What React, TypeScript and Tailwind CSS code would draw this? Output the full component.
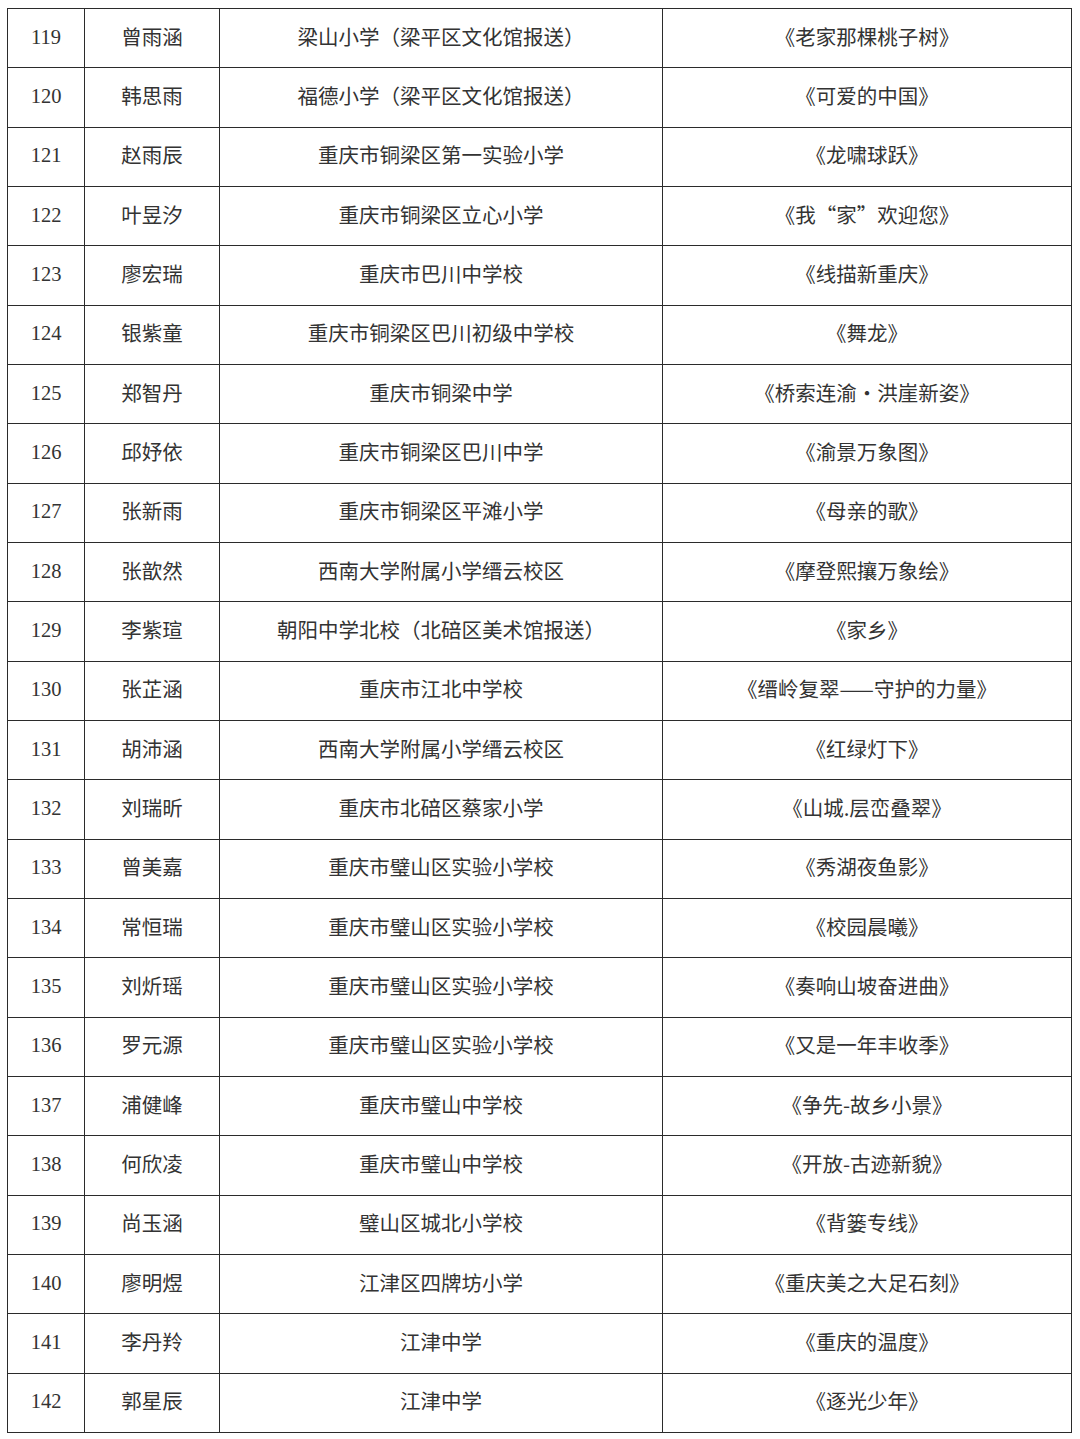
import React from 'react';

// rows of the award list: number, name, school, work title
const rows: [string, string, string, string][] = [
  ['119', '曾雨涵', '梁山小学（梁平区文化馆报送）', '《老家那棵桃子树》'],
  ['120', '韩思雨', '福德小学（梁平区文化馆报送）', '《可爱的中国》'],
  ['121', '赵雨辰', '重庆市铜梁区第一实验小学', '《龙啸球跃》'],
  ['122', '叶昱汐', '重庆市铜梁区立心小学', '《我“家”欢迎您》'],
  ['123', '廖宏瑞', '重庆市巴川中学校', '《线描新重庆》'],
  ['124', '银紫童', '重庆市铜梁区巴川初级中学校', '《舞龙》'],
  ['125', '郑智丹', '重庆市铜梁中学', '《桥索连渝·洪崖新姿》'],
  ['126', '邱妤依', '重庆市铜梁区巴川中学', '《渝景万象图》'],
  ['127', '张新雨', '重庆市铜梁区平滩小学', '《母亲的歌》'],
  ['128', '张歆然', '西南大学附属小学缙云校区', '《摩登熙攘万象绘》'],
  ['129', '李紫瑄', '朝阳中学北校（北碚区美术馆报送）', '《家乡》'],
  ['130', '张芷涵', '重庆市江北中学校', '《缙岭复翠——守护的力量》'],
  ['131', '胡沛涵', '西南大学附属小学缙云校区', '《红绿灯下》'],
  ['132', '刘瑞昕', '重庆市北碚区蔡家小学', '《山城.层峦叠翠》'],
  ['133', '曾美嘉', '重庆市璧山区实验小学校', '《秀湖夜鱼影》'],
  ['134', '常恒瑞', '重庆市璧山区实验小学校', '《校园晨曦》'],
  ['135', '刘炘瑶', '重庆市璧山区实验小学校', '《奏响山坡奋进曲》'],
  ['136', '罗元源', '重庆市璧山区实验小学校', '《又是一年丰收季》'],
  ['137', '浦健峰', '重庆市璧山中学校', '《争先-故乡小景》'],
  ['138', '何欣凌', '重庆市璧山中学校', '《开放-古迹新貌》'],
  ['139', '尚玉涵', '璧山区城北小学校', '《背篓专线》'],
  ['140', '廖明煜', '江津区四牌坊小学', '《重庆美之大足石刻》'],
  ['141', '李丹羚', '江津中学', '《重庆的温度》'],
  ['142', '郭星辰', '江津中学', '《逐光少年》'],
];

const cell = 'flex items-center justify-center border-r border-b border-[#2b2b2b] whitespace-nowrap';
const cjk = "font-['Noto_Sans_CJK_SC',sans-serif] pb-[4px]";

export default function App() {
  return (
    <div className="w-[1080px] h-[1439px] bg-white pt-[8px] pl-[7px] text-[#333] text-[20.5px]">
      <div className="w-[1065px] border-l border-t border-[#2b2b2b]">
        {rows.map(([no, name, school, work]) => (
          <div key={no} className="grid grid-cols-[77px_135px_443px_409px] h-[59.33px]">
            <div className={`${cell} font-['Liberation_Serif',serif] pb-[2px]`}>{no}</div>
            <div className={`${cell} ${cjk}`}>{name}</div>
            <div className={`${cell} ${cjk}`}>{school}</div>
            <div className={`${cell} ${cjk}`}>{work}</div>
          </div>
        ))}
      </div>
    </div>
  );
}
